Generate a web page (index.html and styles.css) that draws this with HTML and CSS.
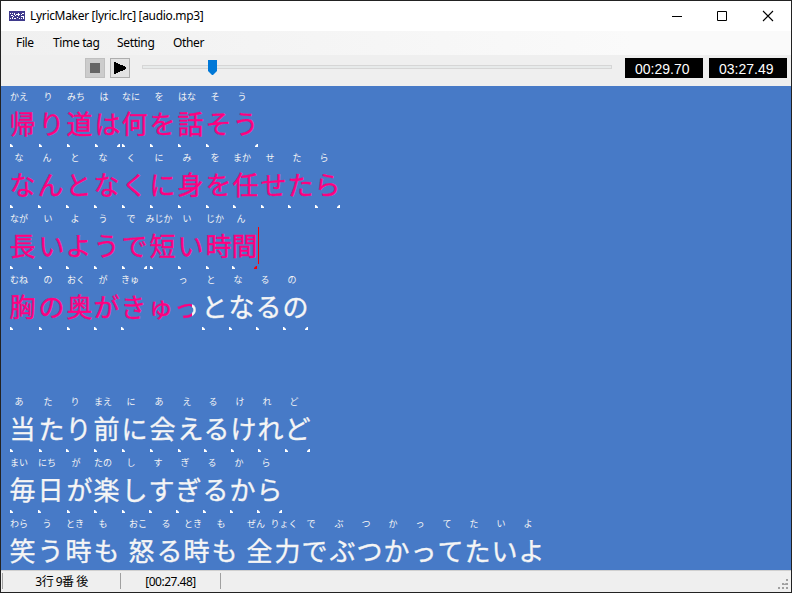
FILE: index.html
```html
<!DOCTYPE html>
<html lang="ja">
<head>
<meta charset="utf-8">
<title>LyricMaker</title>
<link rel="stylesheet" href="styles.css">
</head>
<body>
<div class="window">
  <header class="titlebar">
    <svg class="logo" width="16" height="10" viewBox="0 0 16 10" shape-rendering="crispEdges">
      <path fill="#3f3a8c" d="M0 0h16v10H0z"/>
      <path fill="#fff" d="M1 2h1v1H1zM3 2h1v1H3zM5 2h1v2H5zM7 3h1v1H7zM9 2h1v3H9zM8 3h3v1H8zM13 2h2v1h-2zM12 3h1v1h-1zM2 4h2v1H2zM4 5h1v1H4zM6 4h1v1H6zM12 5h3v1h-3zM1 7h1v1H1zM3 6h1v2H3zM5 7h2v1H5zM8 6h1v1H8zM10 7h1v1h-1zM12 7h1v1h-1zM14 6h1v2h-1z"/>
    </svg>
    <span class="title">LyricMaker [lyric.lrc] [audio.mp3]</span>
    <svg class="caption" width="102" height="12" viewBox="0 0 102 12" fill="none" stroke="#000">
      <path d="M0 6.5h10"/>
      <path d="M45.5 1.5h9v9h-9z"/>
      <path d="M91 1l10 10M101 1L91 11" stroke-width="1.1"/>
    </svg>
  </header>
  <nav class="menu">
    <span class="file">File</span><span class="time">Time tag</span><span class="setting">Setting</span><span class="other">Other</span>
  </nav>
  <div class="toolbar">
    <div class="button stop"><svg width="10" height="10"><path d="M0 0h10v10H0z" fill="#646464"/></svg></div>
    <div class="button play"><svg width="12" height="12" shape-rendering="crispEdges"><path d="M0 0h1l11 5v2L1 12H0z"/></svg></div>
    <div class="slider"><div class="track"></div><svg class="thumb" width="9" height="15"><path d="M0 0h9v11l-4 4h-1l-4-4z" fill="#0078d7"/></svg></div>
    <div class="clock">00:29.70</div>
    <div class="clock">03:27.49</div>
  </div>
  <main class="lyrics">
    <div class="line sung">
      <div class="c w29 s"><i>かえ</i><b>帰</b></div><div class="c s"><i>り</i><b>り</b></div><div class="c s"><i>みち</i><b>道</b></div><div class="c w27 s e"><i>は</i><b>は</b></div><div class="c s"><i>なに</i><b>何</b></div><div class="c s"><i>を</i><b>を</b></div><div class="c s"><i>はな</i><b>話</b></div><div class="c w27 s"><i>そ</i><b>そ</b></div><div class="c e"><i>う</i><b>う</b></div>
    </div>
    <div class="line sung">
      <div class="c s"><i>な</i><b>な</b></div><div class="c s"><i>ん</i><b>ん</b></div><div class="c s"><i>と</i><b>と</b></div><div class="c s"><i>な</i><b>な</b></div><div class="c s"><i>く</i><b>く</b></div><div class="c s"><i>に</i><b>に</b></div><div class="c s"><i>み</i><b>身</b></div><div class="c w27 s"><i>を</i><b>を</b></div><div class="c s"><i>まか</i><b>任</b></div><div class="c w27 s"><i>せ</i><b>せ</b></div><div class="c w27 s"><i>た</i><b>た</b></div><div class="c s e"><i>ら</i><b>ら</b></div>
    </div>
    <div class="line sung">
      <div class="c w29 s"><i>なが</i><b>長</b></div><div class="c w27 s"><i>い</i><b>い</b></div><div class="c s"><i>よ</i><b>よ</b></div><div class="c s"><i>う</i><b>う</b></div><div class="c s e"><i>で</i><b>で</b></div><div class="c s"><i>みじか</i><b>短</b></div><div class="c s"><i>い</i><b>い</b></div><div class="c w26 s"><i>じか</i><b>時</b></div><div class="c s e current"><i>ん</i><b>間</b></div>
    </div>
    <div class="line sung">
      <div class="c w29 s"><i>むね</i><b>胸</b></div><div class="c s"><i>の</i><b>の</b></div><div class="c w27 s"><i>おく</i><b>奥</b></div><div class="c w27 s"><i>が</i><b>が</b></div><div class="c w27 s"><i>きゅ</i><b>き</b></div><div class="c w26"><b>ゅ</b></div><div class="c partial"><i>っ</i><b>っ</b></div><div class="c w27 s rest"><i>と</i><b>と</b></div><div class="c w27 s rest"><i>な</i><b>な</b></div><div class="c w27 s rest"><i>る</i><b>る</b></div><div class="c s e rest"><i>の</i><b>の</b></div>
    </div>
    <div class="line"></div>
    <div class="line">
      <div class="c w29 s"><i>あ</i><b>当</b></div><div class="c w27 s"><i>た</i><b>た</b></div><div class="c s"><i>り</i><b>り</b></div><div class="c s"><i>まえ</i><b>前</b></div><div class="c s"><i>に</i><b>に</b></div><div class="c s"><i>あ</i><b>会</b></div><div class="c w26 s"><i>え</i><b>え</b></div><div class="c w27 s"><i>る</i><b>る</b></div><div class="c w27 s"><i>け</i><b>け</b></div><div class="c w27 s"><i>れ</i><b>れ</b></div><div class="c s e"><i>ど</i><b>ど</b></div>
    </div>
    <div class="line">
      <div class="c s"><i>まい</i><b>毎</b></div><div class="c w29 s"><i>にち</i><b>日</b></div><div class="c w27 s"><i>が</i><b>が</b></div><div class="c s"><i>たの</i><b>楽</b></div><div class="c w27 s"><i>し</i><b>し</b></div><div class="c w27 s"><i>す</i><b>す</b></div><div class="c w27 s"><i>ぎ</i><b>ぎ</b></div><div class="c w27 s"><i>る</i><b>る</b></div><div class="c w27 s"><i>か</i><b>か</b></div><div class="c s e"><i>ら</i><b>ら</b></div>
    </div>
    <div class="line">
      <div class="c"><i>わら</i><b>笑</b></div><div class="c"><i>う</i><b>う</b></div><div class="c"><i>とき</i><b>時</b></div><div class="c gap"><i>も</i><b>も</b></div><div class="c"><i>おこ</i><b>怒</b></div><div class="c w27"><i>る</i><b>る</b></div><div class="c"><i>とき</i><b>時</b></div><div class="c gap"><i>も</i><b>も</b></div><div class="c"><i>ぜん</i><b>全</b></div><div class="c w27"><i>りょく</i><b>力</b></div><div class="c"><i>で</i><b>で</b></div><div class="c w27"><i>ぶ</i><b>ぶ</b></div><div class="c w27"><i>つ</i><b>つ</b></div><div class="c w27"><i>か</i><b>か</b></div><div class="c w27"><i>っ</i><b>っ</b></div><div class="c w27"><i>て</i><b>て</b></div><div class="c w27"><i>た</i><b>た</b></div><div class="c w27"><i>い</i><b>い</b></div><div class="c"><i>よ</i><b>よ</b></div>
    </div>
  </main>
  <footer class="status">
    <span class="position">3行 9番 後</span><span class="stamp">[00:27.48]</span>
    <svg class="grip" width="11" height="11" fill="#a0a0a0"><path d="M8 0h2v2H8zM4 4h2v2H4zM8 4h2v2H4zM0 8h2v2H0zM4 8h2v2H4zM8 8h2v2H8z"/></svg>
  </footer>
</div>
</body>
</html>
```

FILE: styles.css
```css
* { box-sizing: border-box; }
body { margin: 0; }
svg { display: block; }

.window {
  width: 792px;
  height: 593px;
  border: 1px solid #222;
  display: grid;
  grid-template-rows: 30px 24px 31px 484px 22px;
  background: #efefef;
  color: #000;
  font: 12px/16px "Noto Sans", "Noto Sans CJK JP", sans-serif;
  overflow: hidden;
}

.titlebar {
  background: #fff;
  display: flex;
  align-items: center;
  padding: 0 17px 0 8px;
}
.title { margin-left: 5px; letter-spacing: -0.32px; }
.caption { margin-left: auto; }

.menu {
  display: flex;
  align-items: center;
  padding-left: 15px;
  background: linear-gradient(90deg, #f0f0f0, #fafafa 80%);
  letter-spacing: -0.35px;
  white-space: nowrap;
}
.file { width: 37px; }
.time { width: 64px; }
.setting { width: 56px; }

.toolbar {
  display: flex;
  align-items: flex-start;
  padding: 3px 4px 0 84px;
}
.button {
  width: 20px;
  height: 20px;
  margin-right: 5px;
  border: 1px solid #adadad;
  background: #e3e3e3;
  display: grid;
  place-items: center;
}
.stop { background: #ccc; border-color: #bfbfbf; }
.slider { width: 470px; margin: 7px 13px 0 7px; position: relative; }
.track { height: 4px; border: 1px solid #d6d6d6; background: #e7eaea; }
.thumb { position: absolute; left: 66px; top: -5px; }
.clock {
  width: 78px;
  height: 20px;
  padding-left: 10px;
  background: #000;
  color: #fff;
  font: 14px/22px "Liberation Sans", sans-serif;
}
.clock + .clock { margin-left: 6px; }

.lyrics {
  background: #477ac7;
  color: #f5f5f5;
  padding-left: 9px;
  overflow: hidden;
  font-family: "Noto Sans CJK JP", sans-serif;
}
.line { height: 61px; display: flex; }
.c {
  flex: none;
  width: 28px;
  display: grid;
  grid-template: 20px 38px 3px / 25px;
  position: relative;
}
.w26 { width: 26px; }
.w27 { width: 27px; }
.w29 { width: 29px; }
.gap { width: 35px; }
.c i {
  grid-area: 1 / 1;
  width: 18px;
  display: flex;
  justify-content: center;
  font-style: normal;
  font-size: 9px;
  line-height: 22px;
  white-space: nowrap;
}
.c b {
  grid-area: 2 / 1;
  display: flex;
  justify-content: center;
  font-weight: 400;
  font-size: 26px;
  line-height: 34px;
  white-space: nowrap;
  -webkit-text-stroke: 0.35px;
}
.sung b { color: #ff0080; }
.sung .rest b { color: #f5f5f5; }
.sung .partial b {
  color: transparent;
  background: linear-gradient(90deg, #ff0080 18px, #f5f5f5 18px);
  background-clip: text;
}

/* Time tag markers at the start and end of a character */
.s::before, .e::after {
  content: "";
  grid-area: 3 / 1;
  width: 3px;
  height: 3px;
  background: #fff;
  clip-path: polygon(0 0, 1px 0, 3px 2px, 3px 3px, 0 3px);
}
.e::after {
  justify-self: end;
  clip-path: polygon(2px 0, 3px 0, 3px 3px, 0 3px, 0 2px);
}
.current::after { background: #f00; }
.current { background: linear-gradient(#f00, #f00) 26px 19px / 1px 37px no-repeat; }

.status {
  border-top: 1px solid #d0d0d0;
  display: flex;
  align-items: center;
  padding: 0 2px 1px 1px;
  font-size: 12px;
  letter-spacing: -0.5px;
}
.position, .stamp {
  height: 16px;
  line-height: 17px;
  border-right: 1px solid #a0a0a0;
  text-align: center;
}
.position { width: 119px; border-left: 1px solid #a0a0a0; }
.stamp { width: 100px; }
.grip { margin: 6px 0 0 auto; }
```
